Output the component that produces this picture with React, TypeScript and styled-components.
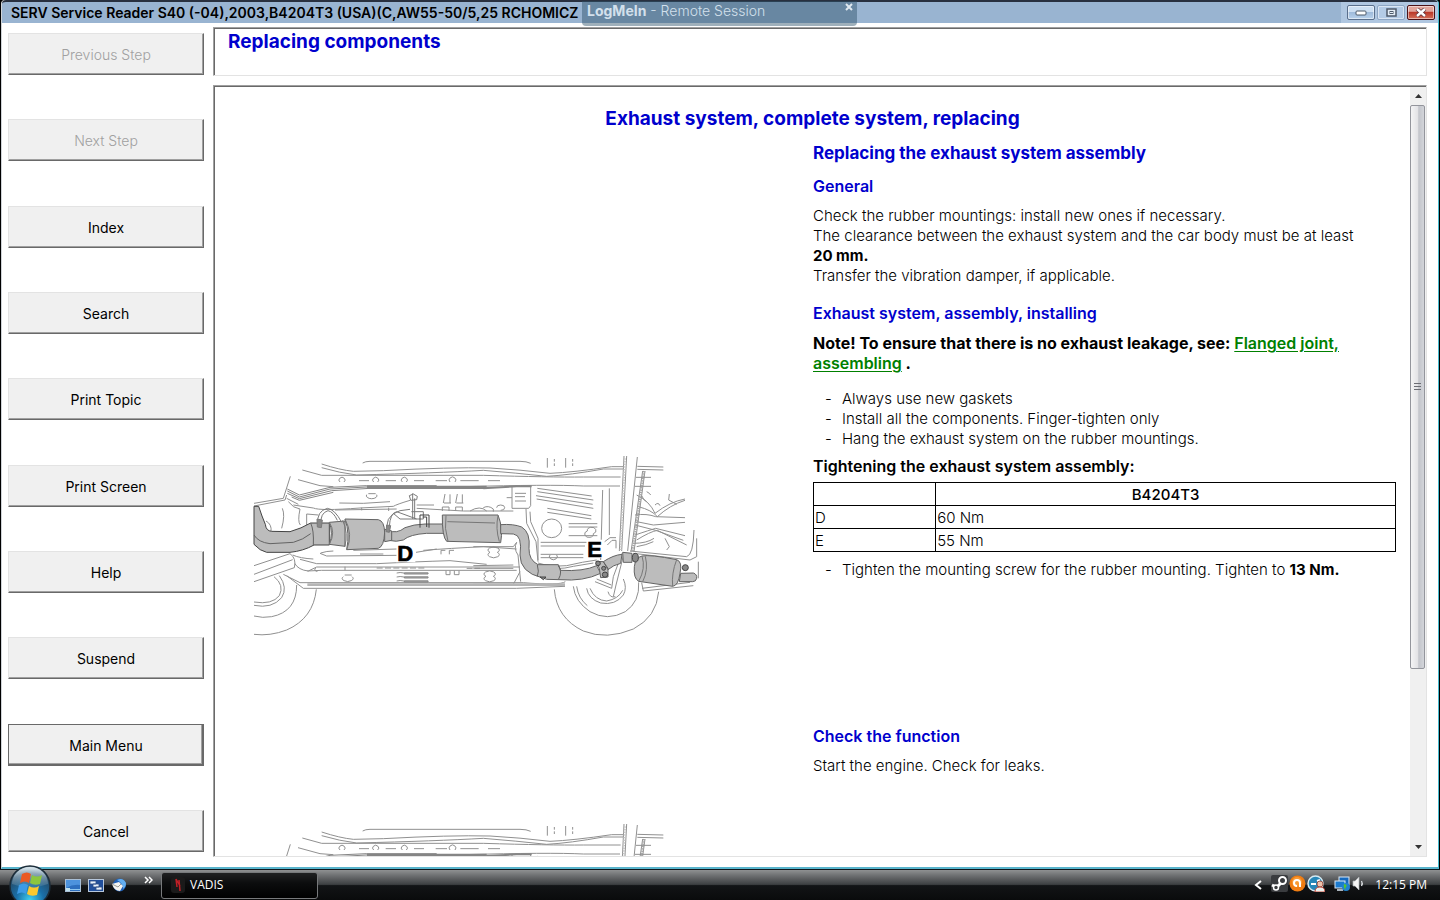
import React from 'react';
import styled, { createGlobalStyle, css } from 'styled-components';

const GlobalStyle = createGlobalStyle`
  *, *::before, *::after { box-sizing: border-box; }
  body { margin: 0; background: #fff; color: #000; font-family: Inter, "Liberation Sans", sans-serif; font-size: 15px; font-weight: 300; line-height: 20px; }
  h1, h2, h3, h4, p, ul { margin: 0; padding: 0; }
`;

const blue = '#0000cd';

const Desktop = styled.div`
  display: flex;
  flex-direction: column;
  height: 100vh;
  min-height: 600px;
  background: #000;
`;

const Window = styled.main`
  position: relative;
  flex: 1;
  min-height: 0;
  display: flex;
  flex-direction: column;
  margin: 0 1px;
  border: solid #d0d4d8;
  border-width: 0 1px 2px;
  border-right-color: #46bcd0;
  border-bottom-color: #58b4cc;
  border-radius: 4px 4px 0 0;
  background: #fff;
`;

const TitleBar = styled.header`
  display: flex;
  align-items: center;
  justify-content: space-between;
  height: 23px;
  padding-left: 9px;
  border-top: 2px solid #28303f;
  border-radius: 4px 4px 0 0;
  background: #99b4d1;
`;

const WindowTitle = styled.span`
  padding-top: 1px;
  font-size: 14px;
  font-weight: 600;
  white-space: nowrap;
`;

const WindowControls = styled.div`
  display: flex;
  gap: 2px;
  height: 100%;
  align-items: center;
  padding: 0 3px 0 6px;
  background: #b0c7e1;
`;

const WindowButton = styled.button<{ $tone?: 'soft' | 'close' }>`
  display: grid;
  place-items: center;
  width: 28px;
  height: 15px;
  padding: 0;
  border: 1px solid #5a6f8c;
  border-radius: 2px;
  box-shadow: inset 0 0 0 1px rgba(255, 255, 255, 0.5);
  background: linear-gradient(#cddff2 0 45%, #9fbbdb 50%, #b9d2ec);
  ${({ $tone }) => $tone === 'soft' && css`
    border-color: #8ea6c4;
    background: #b4cbe6;
  `}
  ${({ $tone }) => $tone === 'close' && css`
    border-color: #4c1217;
    background: linear-gradient(#e2a59b 0 40%, #bb3a2a 50%, #d5705a);
  `}
`;

const SessionTab = styled.aside`
  position: absolute;
  z-index: 2;
  top: 1px;
  left: 580px;
  display: flex;
  justify-content: space-between;
  width: 275px;
  height: 25px;
  padding: 0 4px 0 5px;
  border-radius: 0 0 4px 4px;
  background: rgba(45, 82, 107, 0.46);
  color: #d3e0ec;
  font-size: 14px;
`;

const SessionClose = styled.button`
  height: 12px;
  padding: 0;
  border: 0;
  background: none;
  line-height: 0;
`;

const Body = styled.div`
  flex: 1;
  min-height: 0;
  display: flex;
  gap: 9px;
  padding: 4px 11px 10px 6px;
`;

const Sidebar = styled.nav`
  flex: none;
  display: flex;
  flex-direction: column;
  justify-content: space-between;
  width: 196px;
  padding: 6px 0 5px;
`;

const StepButton = styled.button<{ $focused?: boolean }>`
  height: 42px;
  padding: 2px 6px 0;
  border: 1px solid;
  border-color: #e3e3e3 #696969 #696969 #e3e3e3;
  box-shadow: inset -1px -1px #a0a0a0;
  background: #f0f0f0;
  color: #000;
  font: 400 14px/20px Inter, "Liberation Sans", sans-serif;
  &:disabled { color: #a0a0a0; font-weight: 300; }
  ${({ $focused }) => $focused && css`
    border-color: #696969;
    box-shadow: inset -1px -1px #696969, inset -2px -2px #a0a0a0;
  `}
`;

const Content = styled.div`
  flex: 1;
  min-width: 0;
  display: flex;
  flex-direction: column;
  gap: 9px;
`;

const sunken = css`
  border: 1px solid;
  border-color: #a0a0a0 #e3e3e3 #e3e3e3 #a0a0a0;
  box-shadow: inset 1px 1px #696969;
`;

const TopicPanel = styled.section`
  ${sunken}
  flex: none;
  height: 49px;
  padding: 2px 14px;
`;

const TopicTitle = styled.h2`
  color: ${blue};
  font-size: 19px;
  font-weight: 700;
  line-height: 24px;
`;

const ArticlePanel = styled.section`
  ${sunken}
  flex: 1;
  min-height: 0;
  display: flex;
  padding: 1px 0 0 1px;
`;

const Article = styled.article`
  flex: 1;
  min-width: 0;
  overflow: hidden;
  padding: 20px 14px 0 35px;
`;

const ArticleTitle = styled.h1`
  margin-left: -21px;
  margin-bottom: 12px;
  color: ${blue};
  font-size: 19px;
  font-weight: 700;
  line-height: 24px;
  text-align: center;
`;

const Step = styled.div`
  display: grid;
  grid-template-columns: minmax(0, 563fr) minmax(0, 583fr);
  min-height: 583px;
`;

const Figure = styled.figure<{ $top: number }>`
  margin: 0;
  padding-top: ${({ $top }) => $top}px;
`;

const Drawing = styled.svg`
  display: block;
  width: 450px;
  height: 200px;
`;

const Text = styled.div`
  min-width: 0;
`;

const SectionTitle = styled.h2`
  margin-bottom: 13px;
  color: ${blue};
  font-size: 17px;
  font-weight: 700;
`;

const SubTitle = styled.h3`
  margin-bottom: 10px;
  color: ${blue};
  font-size: 16px;
  font-weight: 600;
  p + & { margin-top: 17px; }
`;

const Strong = styled.strong`
  font-weight: 700;
  white-space: nowrap;
`;

const Note = styled.p`
  margin-bottom: 16px;
  font-size: 16px;
  font-weight: 700;
`;

const TopicLink = styled.a`
  color: #008000;
  font-weight: 600;
  text-underline-offset: 2px;
`;

const Steps = styled.ul`
  list-style: none;
  margin-bottom: 7px;
`;

const StepItem = styled.li`
  display: grid;
  grid-template-columns: 17px 1fr;
  padding-left: 12px;
  &::before { content: "-"; }
`;

const TableTitle = styled.h4`
  margin-bottom: 6px;
  font-size: 16px;
  font-weight: 600;
`;

const TorqueTable = styled.table`
  width: 100%;
  margin-bottom: 8px;
  border-collapse: collapse;
  table-layout: fixed;
  th, td { height: 23px; padding: 1px 1px 0; border: 1px solid #000; }
  td, tbody th { text-align: left; font-weight: 300; }
  thead th { font-weight: 500; text-align: center; }
  thead td { width: 21%; }
`;

const ScrollBar = styled.div`
  flex: none;
  display: flex;
  flex-direction: column;
  width: 16px;
  background: #f0f0f0;
`;

const ScrollButton = styled.button`
  flex: none;
  display: grid;
  place-items: center;
  height: 18px;
  padding: 0;
  border: 0;
  background: none;
`;

const ScrollTrack = styled.div`
  flex: 1;
`;

const ScrollThumb = styled.div`
  display: grid;
  place-items: center;
  height: 77%;
  width: 15px;
  border: 1px solid #93959c;
  border-radius: 2px;
  background: linear-gradient(90deg, #f4f4f5, #e3e3e6 50%, #c3c5cb 60%, #d3d5da);
`;

const TaskBar = styled.footer`
  flex: none;
  display: flex;
  align-items: center;
  height: 31px;
  padding: 0 13px 0 8px;
  border-top: 1px solid #10161c;
  background: linear-gradient(#8f9192, #6b6d6f 20%, #3d4042 48%, #121416 52%, #0a0b0c);
  color: #fff;
`;

const StartButton = styled.button`
  position: relative;
  z-index: 3;
  width: 44px;
  height: 30px;
  padding: 0;
  border: 0;
  background: none;
  svg { position: absolute; left: 0; bottom: -7px; }
`;

const QuickLaunch = styled.div`
  display: flex;
  align-items: center;
  gap: 7px;
  margin-left: 13px;
`;

const TrayButton = styled.button`
  padding: 0;
  border: 0;
  background: none;
  line-height: 0;
`;

const MoreButton = styled(TrayButton)`
  align-self: flex-start;
  margin: 6px 8px 0 17px;
`;

const TaskButton = styled.button`
  display: flex;
  align-items: center;
  gap: 4px;
  width: 157px;
  height: 27px;
  padding: 0 8px;
  border: 1px solid #77797b;
  border-radius: 3px;
  background: linear-gradient(#202122, #0c0d0e 40%, #000);
  color: #fff;
  font: 400 12px/16px "Open Sans", sans-serif;
`;

const Tray = styled.div`
  display: flex;
  align-items: center;
  gap: 9px;
  margin-left: auto;
`;

const TrayGroup = styled.div`
  display: flex;
  align-items: center;
  gap: 1px;
  margin-bottom: 3px;
`;

const Clock = styled.time`
  font: 400 12px/16px "Open Sans", sans-serif;
`;

const steps = [
  { label: 'Previous Step', disabled: true },
  { label: 'Next Step', disabled: true },
  { label: 'Index' },
  { label: 'Search' },
  { label: 'Print Topic' },
  { label: 'Print Screen' },
  { label: 'Help' },
  { label: 'Suspend' },
  { label: 'Main Menu', focused: true },
  { label: 'Cancel' },
];

const torques = [
  { point: 'D', value: '60 Nm' },
  { point: 'E', value: '55 Nm' },
];

function ExhaustDrawing({ labelled = false }: { labelled?: boolean }) {
  return (
    <Drawing viewBox="0 0 1350 600" role="img" aria-label="Exhaust system seen from below">
      <g fill="none" stroke="#909090" strokeWidth="3">
        {/* upper sill */}
        <path d="M215 57Q270 75 310 79L400 77Q600 66 720 69Q810 74 900 85Q970 82 1085 65L1120 65M215 68Q270 84 320 90Q560 84 700 76Q800 84 890 94Q960 90 1060 72L1120 72M1162 64L1240 66M1162 73L1240 75" />
        <path d="M338 54Q346 49 360 49H810Q830 49 842 55M157 75L215 91H700Q900 97 1000 96H1112M1158 97H1203M144 104L210 122L250 125M640 125Q900 118 1000 123H1110M1155 124H1203" />
        <path d="M892 39V68M947 39V68" />
        <path d="M913 42V68M968 42V68" strokeDasharray="8 5" />
        <path d="M327 107H357M407 107H438M492 107H522M557 107H591M631 107H686M714 107H750M270 111a9 8 0 1 1 12 0M371 111a9 8 0 1 1 12 0M457 111a9 8 0 1 1 12 0M600 111a10 9 0 1 1 15 0" />
        {/* firewall */}
        <path d="M121 94L100 160L12 175M110 150L105 165L12 183M110 160L145 178M97 190Q106 210 95 250M115 170Q130 190 150 192Q142 230 151 240M48 228Q66 238 63 260M130 180L190 189Q210 198 330 189L430 184Q440 178 480 166M170 240V207L205 210" />
        <path d="M268 174L340 175L420 170M350 149a16 9 0 1 0 30 0M355 146H377M500 180H552M500 190L640 198M640 198H790M255 195L440 192M335 188v8M416 188v10" />
        <path d="M580 174L585 147M603 174H582M600 174V148M617 174L622 147M640 174H619M637 174V148M577 198V186H597V198M617 198V186H637V198" />
        {/* lower sill */}
        <path d="M128 330Q150 340 190 342M210 325L230 333L440 331M150 343L200 356H380Q500 350 600 347L710 358M134 355Q145 375 175 378L200 366H810M172 378L215 376H800M330 327H400M310 316L440 312M498 322L560 312M520 316Q600 310 700 305L800 312M250 318Q230 318 212 324" />
        <path d="M380 369H530M650 370H690" strokeDasharray="18 7" />
        <path d="M285 365V376M197 369a5 5 0 1 0 6 9M280 395a16 9 0 1 0 26 0M284 390H305M573 328V316H586M598 328V316H612M588 377V389H600V377M613 377V389H627V377" />
        <path d="M440 384Q450 381 462 384H535M440 396Q450 393 462 396H535M440 408Q450 405 462 408H535" />
        <path d="M12 362L120 326Q140 340 133 368L12 410M12 388L128 344M100 388L150 413H820Q930 422 946 410M110 392L160 430H800L945 424" />
        {/* front wheel */}
        <path d="M72 395Q104 420 88 452Q66 480 12 471M88 392Q114 428 95 458Q66 492 12 481M140 420Q140 500 65 515Q38 520 12 513M199 433Q190 520 110 555Q60 574 12 568" />
        {/* rear wheel */}
        <path d="M913 433Q920 520 1000 558Q1070 586 1150 552Q1220 516 1226 440M970 424Q975 470 1020 500Q1072 530 1126 500Q1170 470 1166 412M980 424Q985 460 1012 482M1010 430Q1015 462 1052 474Q1096 482 1120 450Q1132 428 1120 402M1020 430Q1035 466 1070 468Q1105 462 1118 436" />
        {/* floor ribs */}
        <path d="M862 130L1025 153M862 140L1030 165M858 152L1028 178M860 162L1030 190M892 190L1024 212M892 202L1024 222M956 236H1042M956 246H1042M956 272H1042M872 292H1010M872 303H1005M872 328H1000M872 338H1000" />
        <path d="M1012 258a13 10 0 1 1 18 8a13 10 0 1 1 -18 -8M720 322a17 9 0 1 0 22 0a17 9 0 1 0 -22 0M708 394a17 9 0 1 0 22 0a17 9 0 1 0 -22 0M900 330a12 9 0 1 0 20 0" />
        <ellipse cx="905" cy="250" rx="30" ry="28" />
        <path d="M786 125V190H836L842 182V125M795 145H828M795 155H825M795 168H828M770 158H786M828 192L830 235L858 290L864 350M840 200L842 230L864 280V345M700 188Q715 180 730 192V200M660 198Q690 180 710 198M740 188a12 8 0 1 1 12 8M670 305H790L800 292M670 362L790 360M790 370H670M670 418H790L810 380M800 292Q790 310 804 330L812 410" />
        {/* suspension arms */}
        <path d="M864 354Q900 366 950 362Q1000 350 1040 345M864 362Q920 378 970 364L1030 354M1078 130V270M1058 135L1052 345M1064 290L1080 278H1098M1072 300L1086 286H1098V310M1035 410L1085 430L1090 395L1116 325M1040 402L1084 420M1090 455L1098 420L1122 325M1074 440Q1080 460 1096 455" />
        <path d="M1175 413L1180 438L1330 422M1176 430L1320 412M1140 318L1310 335Q1330 330 1332 255M1150 325L1320 345L1340 335V280M1345 400V350" />
        {/* spare wheel well */}
        <path d="M1160 150Q1200 170 1215 205Q1260 170 1305 162M1165 185Q1205 195 1222 215Q1260 180 1305 166M1155 210Q1190 205 1217 215L1305 218M1155 270Q1200 255 1217 250L1305 272M1160 230L1210 240L1305 232M1155 240L1217 256L1300 286M1160 285Q1200 260 1222 256L1310 300M1258 147L1256 165L1280 178M1175 152Q1180 165 1190 170M1202 150Q1200 145 1190 140M1215 180Q1225 170 1230 182M1150 295Q1190 295 1212 280M1160 305Q1190 300 1210 290M1245 280L1258 305L1250 315" />
        <path d="M1122 33L1108 318M1130 33L1115 318M1162 36L1133 318M1178 78L1143 320M1185 78L1152 320" />
      </g>
      {/* heat shield edge */}
      <g fill="none" stroke="#858585" strokeWidth="3">
        <path d="M112 132L148 150L240 127L350 122H560M112 138L148 156L240 132L350 126M112 145L148 161L245 137L360 130M125 156L148 166L250 142" />
        <path d="M350 127H710" strokeWidth="10" />
        <path d="M700 130L800 124L845 124" strokeWidth="6" />
        <path d="M1182 78L1148 318" strokeWidth="7" strokeDasharray="4 3" stroke="#a5a5a5" />
        <path d="M1125 40L1112 315" strokeWidth="6" strokeDasharray="4 4" stroke="#c8c8c8" />
        <path d="M172 419H945" strokeWidth="8" stroke="#b5b5b5" />
        <path d="M463 384H534V387H463ZM463 396H534V399H463ZM463 408H534V411H463Z" />
      </g>
      {/* front pipe, catalytic converter and silencers */}
      <g fill="#bcbcbc" stroke="#636363" strokeWidth="3" strokeLinejoin="round">
        <path d="M12 184H26Q36 215 46 238Q48 258 65 259L120 260Q155 250 182 234H238V300L192 300Q160 318 120 322H50Q30 318 12 298Z" stroke="#444" />
        <path d="M12 270Q25 292 60 296L130 292Q160 284 182 266M182 234Q192 255 190 300" fill="none" />
        <path d="M415 256Q440 268 465 248Q490 238 525 237H582V265H530Q480 268 460 285Q440 292 415 286Z" />
        <path d="M238 232L285 228V304L238 298Q250 265 238 232Z" />
        <path d="M285 222L385 224Q403 228 404 262Q402 305 385 310L290 314Q300 265 285 222Z" />
        <path d="M285 222Q310 268 290 314M238 232Q258 262 238 298M278 226Q296 264 284 306" fill="none" stroke="#777" />
        <path d="M404 253L425 258V286L404 290Z" />
        <path d="M577 210H744Q760 250 752 293L590 289Q576 275 577 210Z" />
        <path d="M588 211Q582 250 594 289M592 230L735 234M744 212Q736 250 748 290" fill="none" stroke="#777" />
        <path d="M752 239Q790 236 815 246Q842 262 837 310Q836 345 864 359H925L932 376Q1000 380 1040 362L1052 385Q1000 410 930 404L890 403L875 398Q810 382 810 330Q818 270 790 267L752 266Z" />
        <path d="M862 360Q868 380 862 394M925 362Q938 380 926 402" fill="none" />
        <path d="M1038 349L1060 350L1074 370V396L1052 398L1048 370ZM1060 350Q1090 330 1116 328L1112 355Q1090 360 1074 374Z" />
        <path d="M1118 322L1146 325V352L1120 352Z" />
        <path d="M1176 333Q1200 328 1280 344Q1298 350 1290 385Q1285 422 1268 424L1166 409Q1150 400 1153 365Q1156 338 1176 333Z" />
        <path d="M1176 333Q1188 370 1166 409M1280 344Q1264 385 1268 424M1186 334Q1196 375 1178 410" fill="none" stroke="#777" />
        <path d="M1292 385L1330 384Q1342 388 1340 400Q1338 410 1328 410H1288Z" />
      </g>
      {/* hangers and bolts */}
      <g fill="none" stroke="#7a7a7a" strokeWidth="3">
        <path d="M203 238Q200 198 232 190Q254 192 275 232M213 238Q210 204 234 197Q250 200 262 226M410 245Q412 195 480 193M418 245Q420 205 440 200L500 222M500 222H450L430 205" />
        <path d="M201 222L217 225L214 248L202 246ZM410 240L422 242L418 262L408 260Z" fill="#888" />
        <path d="M488 145V222M494 160V222M478 152L490 147L502 154L500 164L482 166ZM484 200H520V222H500" />
        <path d="M510 248V210H537V248M518 216H530V246" stroke="#444" />
      </g>
      <g fill="#888" stroke="#444" strokeWidth="3">
        <circle cx="1044" cy="355" r="7" /><circle cx="1061" cy="370" r="6" /><circle cx="1065" cy="389" r="8" />
        <ellipse cx="1156" cy="338" rx="9" ry="13" /><circle cx="1306" cy="368" r="9" /><path d="M870 396L880 404L888 396Z" />
      </g>
      {labelled && (
        <>
          <path d="M1010 284H1060V339H1010ZM440 300H496V352H440Z" fill="#fff" />
          <g fontFamily="Liberation Sans, sans-serif" fontSize="66" fontWeight="700" fill="#000" stroke="#000" strokeWidth="2">
            <text x="442" y="347">D</text>
            <text x="1012" y="335">E</text>
          </g>
        </>
      )}
    </Drawing>
  );
}

function StartOrb() {
  return (
    <svg width="44" height="44" viewBox="0 0 44 44" aria-hidden="true">
      <defs>
        <radialGradient id="orb" cx="50%" cy="85%" r="85%">
          <stop offset="0" stopColor="#3fd0f0" /><stop offset=".4" stopColor="#1a6fa8" /><stop offset=".8" stopColor="#254a66" /><stop offset="1" stopColor="#9fb4c0" />
        </radialGradient>
        <linearGradient id="shine" x1="0" y1="0" x2="0" y2="1">
          <stop offset="0" stopColor="#e6f1f6" stopOpacity=".9" /><stop offset="1" stopColor="#7f9fb4" stopOpacity=".2" />
        </linearGradient>
      </defs>
      <circle cx="22" cy="23" r="20" fill="url(#orb)" stroke="#1c2c38" strokeWidth="1.5" />
      <path d="M4 21a18 17 0 0 1 36 0q-18 7-36 0z" fill="url(#shine)" />
      <path d="M14 11q5-3 9 0l-2 9q-4-3-9 0z" fill="#ea5a24" />
      <path d="M24 12q5 3 10 0l-2 9q-6 2-10-1z" fill="#8cc63e" />
      <path d="M11 22q5-3 9 0l-2 9q-4-3-9 0z" fill="#3d9be6" />
      <path d="M21 23q5 3 10 0l-2 9q-6 2-10-1z" fill="#fcc82e" />
    </svg>
  );
}

export default function App() {
  return (
    <>
      <GlobalStyle />
      <Desktop>
        <Window>
          <TitleBar>
            <WindowTitle>SERV Service Reader S40 (-04),2003,B4204T3 (USA)(C,AW55-50/5,25 RCHOMICZ</WindowTitle>
            <WindowControls>
              <WindowButton aria-label="Minimize">
                <svg width="12" height="6"><rect x="1" y="1" width="10" height="4" rx="1" fill="#fff" stroke="#4d5a6b" /></svg>
              </WindowButton>
              <WindowButton aria-label="Restore" $tone="soft">
                <svg width="11" height="9"><rect x="1" y="1" width="9" height="7" fill="#e4ecf5" stroke="#4d5a6b" strokeWidth="1.5" /><rect x="4" y="3.5" width="3" height="2" fill="none" stroke="#4d5a6b" /></svg>
              </WindowButton>
              <WindowButton aria-label="Close" $tone="close">
                <svg width="12" height="9"><path d="M2 1L10 8M10 1L2 8" stroke="#5c3038" strokeWidth="4" /><path d="M2 1L10 8M10 1L2 8" stroke="#fff" strokeWidth="2.4" /></svg>
              </WindowButton>
            </WindowControls>
          </TitleBar>
          <SessionTab>
            <span><Strong>LogMeIn</Strong> - Remote Session</span>
            <SessionClose aria-label="Close session bar">
              <svg width="8" height="12"><path d="M1 3L7 9M7 3L1 9" stroke="#dfe8f0" strokeWidth="2" /></svg>
            </SessionClose>
          </SessionTab>
          <Body>
            <Sidebar>
              {steps.map(({ label, disabled, focused }) => (
                <StepButton key={label} disabled={disabled} $focused={focused}>{label}</StepButton>
              ))}
            </Sidebar>
            <Content>
              <TopicPanel><TopicTitle>Replacing components</TopicTitle></TopicPanel>
              <ArticlePanel>
                <Article>
                  <ArticleTitle>Exhaust system, complete system, replacing</ArticleTitle>
                  <Step>
                    <Figure $top={302}><ExhaustDrawing labelled /></Figure>
                    <Text>
                      <SectionTitle>Replacing the exhaust system assembly</SectionTitle>
                      <SubTitle>General</SubTitle>
                      <p>
                        Check the rubber mountings: install new ones if necessary.<br />
                        The clearance between the exhaust system and the car body must be at least <Strong>20 mm.</Strong><br />
                        Transfer the vibration damper, if applicable.
                      </p>
                      <SubTitle>Exhaust system, assembly, installing</SubTitle>
                      <Note>
                        Note! To ensure that there is no exhaust leakage, see: <TopicLink href="#flanged-joint">Flanged joint, assembling</TopicLink> .
                      </Note>
                      <Steps>
                        <StepItem>Always use new gaskets</StepItem>
                        <StepItem>Install all the components. Finger-tighten only</StepItem>
                        <StepItem>Hang the exhaust system on the rubber mountings.</StepItem>
                      </Steps>
                      <TableTitle>Tightening the exhaust system assembly:</TableTitle>
                      <TorqueTable>
                        <thead><tr><td /><th scope="col">B4204T3</th></tr></thead>
                        <tbody>
                          {torques.map(({ point, value }) => (
                            <tr key={point}><th scope="row">{point}</th><td>{value}</td></tr>
                          ))}
                        </tbody>
                      </TorqueTable>
                      <Steps>
                        <StepItem><span>Tighten the mounting screw for the rubber mounting. Tighten to <Strong>13 Nm.</Strong></span></StepItem>
                      </Steps>
                    </Text>
                  </Step>
                  <Step>
                    <Figure $top={87}><ExhaustDrawing /></Figure>
                    <Text>
                      <SubTitle>Check the function</SubTitle>
                      <p>Start the engine. Check for leaks.</p>
                    </Text>
                  </Step>
                </Article>
                <ScrollBar>
                  <ScrollButton aria-label="Scroll up"><svg width="7" height="4"><path d="M0 4L3.5 0L7 4Z" fill="#333" /></svg></ScrollButton>
                  <ScrollTrack>
                    <ScrollThumb><svg width="7" height="8"><path d="M0 .5H7M0 3.5H7M0 6.5H7" stroke="#6c6e75" /></svg></ScrollThumb>
                  </ScrollTrack>
                  <ScrollButton aria-label="Scroll down"><svg width="7" height="4"><path d="M0 0L3.5 4L7 0Z" fill="#333" /></svg></ScrollButton>
                </ScrollBar>
              </ArticlePanel>
            </Content>
          </Body>
        </Window>
        <TaskBar>
          <StartButton aria-label="Start"><StartOrb /></StartButton>
          <QuickLaunch>
            <TrayButton aria-label="Show desktop">
              <svg width="16" height="13"><rect x=".5" y=".5" width="15" height="12" fill="#2d6fbe" stroke="#a9bfd6" /><path d="M1 1H15V6Q8 5 1 9Z" fill="#4d93dd" /><path d="M1 10.5H15" stroke="#8fc7ef" /><rect x="1" y="9" width="4" height="3" fill="#bfe0ee" /></svg>
            </TrayButton>
            <TrayButton aria-label="Switch windows">
              <svg width="16" height="13"><rect x=".5" y=".5" width="15" height="12" fill="#214f9c" stroke="#b7c7dc" /><path d="M2 2H8V5H2ZM5 5H11V8H5ZM8 8H14V11H8Z" fill="#e8f0fa" stroke="#2b4d86" strokeWidth=".8" /></svg>
            </TrayButton>
            <TrayButton aria-label="Thunderbird">
              <svg width="16" height="14"><circle cx="8.500" cy="7" r="6.500" fill="#1f5fb5" /><path d="M6 2Q12-1 15 5Q15 9 12 11Q13 6 6 2Z" fill="#63aef0" /><path d="M1 6L8 4L12 8L9 13Q3 13 1 6Z" fill="#f3f3f0" /><path d="M1 6L7 9L10 6" fill="none" stroke="#9a9a94" /></svg>
            </TrayButton>
          </QuickLaunch>
          <MoreButton aria-label="More shortcuts">
            <svg width="9" height="8" fill="none" stroke="#fff" strokeWidth="1.500"><path d="M1 1L4 4L1 7M5 1L8 4L5 7" /></svg>
          </MoreButton>
          <TaskButton>
            <svg width="16" height="16" aria-hidden="true"><rect x="1" width="14" height="16" rx="3" fill="#1a1a1a" /><path d="M6 2L7 10M9 3L10 14M6 2L10 9" stroke="#c21f26" strokeWidth="1.500" fill="none" /></svg>
            VADIS
          </TaskButton>
          <Tray>
            <TrayButton aria-label="Show hidden icons"><svg width="8" height="10" fill="none" stroke="#fff" strokeWidth="2"><path d="M7 1L2 5L7 9" /></svg></TrayButton>
            <TrayGroup>
              <svg width="17" height="17"><rect width="17" height="17" rx="2" fill="#3a3c3f" /><circle cx="11.500" cy="5.500" r="3.500" fill="none" stroke="#fff" strokeWidth="2" /><path d="M10 8L6 12M1 10L5 12" stroke="#fff" strokeWidth="3" /><circle cx="5" cy="12.500" r="2.500" fill="#3a3c3f" stroke="#fff" strokeWidth="1.500" /></svg>
              <svg width="17" height="17"><circle cx="8.500" cy="8.500" r="8" fill="#f07d12" /><circle cx="8" cy="7" r="5" fill="#f99b35" /><path d="M11 12V8A3 3 0 1 0 8 11" fill="none" stroke="#fff" strokeWidth="2" /></svg>
              <svg width="18" height="17"><circle cx="8.500" cy="8.500" r="7.500" fill="#2787b8" stroke="#d6eaf2" strokeWidth="1.500" /><path d="M4 9H9M10 6L13 5" stroke="#fff" strokeWidth="2" /><circle cx="13" cy="9" r="3" fill="#edc2ac" stroke="#913b2d" strokeWidth=".8" /><path d="M8 17Q8 12 13 12T18 17Z" fill="#e9efec" stroke="#c44738" /></svg>
            </TrayGroup>
            <TrayGroup>
              <svg width="17" height="16"><rect x="5" y="1" width="10" height="8" fill="#1669bd" stroke="#dce9f5" /><rect x="1" y="5" width="10" height="7" fill="#1c7bcf" stroke="#dce9f5" /><path d="M3 14H9" stroke="#dce9f5" strokeWidth="1.500" /><circle cx="12" cy="11" r="4" fill="#2180d0" /><path d="M10 8Q14 9 12 11T13 15Q9 13 10 8Z" fill="#53c62f" /></svg>
              <svg width="14" height="15"><path d="M1 5H3L7 1V14L3 10H1Z" fill="#f4f4f4" stroke="#aeb2b5" strokeWidth=".7" /><path d="M9.500 5Q11 7.500 9.500 10" fill="none" stroke="#dfe3e6" strokeWidth="1.300" /></svg>
            </TrayGroup>
            <Clock>12:15 PM</Clock>
          </Tray>
        </TaskBar>
      </Desktop>
    </>
  );
}
